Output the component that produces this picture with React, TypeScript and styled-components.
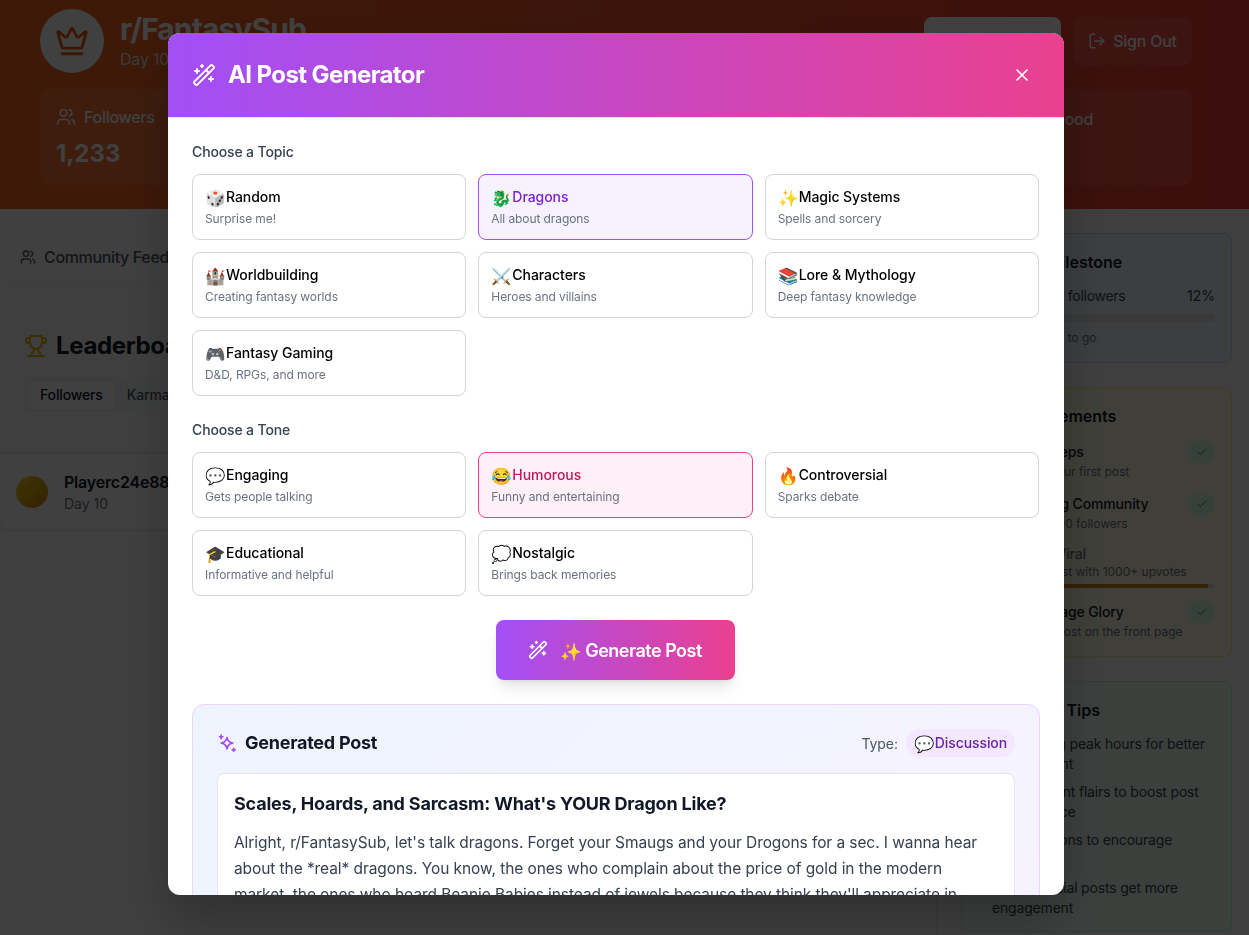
import React from "react";
import styled, { createGlobalStyle } from "styled-components";
import { Crown, Users, LogOut, Trophy, Check, WandSparkles, X, Target, Award, Lightbulb } from "lucide-react";

const Global = createGlobalStyle`
  * { box-sizing: border-box; }
  html, body { margin: 0; padding: 0; height: 100%; overflow: hidden; }
  body { font-family: Inter, "Liberation Sans", sans-serif; background: #f9fafb; color: #111827; }
`;

const Page = styled.div`
  width: 1249px;
  height: 935px;
  overflow: hidden;
  display: flex;
  flex-direction: column;
  background: #f9fafb;
`;

const Header = styled.header`
  height: 209px;
  flex: none;
  background: linear-gradient(90deg, #f4681f, #ec3c34);
  padding: 9px 57px 0 40px;
  color: #fff;
`;

const TopRow = styled.div`
  display: flex;
  align-items: flex-start;
  justify-content: space-between;
`;

const Brand = styled.div`
  display: flex;
  align-items: center;
  gap: 16px;
`;

const Avatar = styled.div`
  width: 64px;
  height: 64px;
  border-radius: 50%;
  background: #fff;
  display: flex;
  align-items: center;
  justify-content: center;
  color: #ea580c;
`;

const SubName = styled.h1`
  margin: 0;
  font-size: 30px;
  line-height: 36px;
  font-weight: 700;
  letter-spacing: -0.9px;
`;

const SubMeta = styled.div`
  font-size: 16px;
  line-height: 24px;
  color: #e5e7eb;
  letter-spacing: -0.2px;
`;

const HeaderActions = styled.div`
  display: flex;
  gap: 12px;
  margin-top: 8px;
`;

const WhiteButton = styled.div`
  width: 137px;
  height: 48px;
  border-radius: 8px;
  background: #fff;
`;

const SignOut = styled.div`
  width: 119px;
  height: 48px;
  border-radius: 8px;
  background: rgba(255, 255, 255, 0.1);
  display: flex;
  align-items: center;
  justify-content: center;
  gap: 7px;
  font-size: 16px;
  font-weight: 500;
  letter-spacing: -0.25px;
`;

const Stats = styled.div`
  display: flex;
  justify-content: space-between;
  margin-top: 16px;
`;

const StatCard = styled.div`
  width: 260px;
  height: 96px;
  border-radius: 8px;
  background: rgba(255, 255, 255, 0.1);
  padding: 16px;
`;

const StatLabel = styled.div`
  display: flex;
  align-items: center;
  gap: 8px;
  font-size: 16px;
  line-height: 24px;
  font-weight: 500;
  letter-spacing: -0.3px;
`;

const StatValue = styled.div`
  margin-top: 9px;
  font-size: 24px;
  line-height: 32px;
  font-weight: 700;
`;

const MoodLabel = styled(StatLabel)`
  justify-content: flex-end;
  margin-top: 2px;
  padding-right: 83px;
`;

const Body = styled.div`
  flex: 1;
  display: grid;
  grid-template-columns: 937px 312px;
  min-height: 0;
`;

const Main = styled.main`
  min-width: 0;
  border-right: 1px solid #e5e7eb;
`;

const Tabs = styled.nav`
  height: 71px;
  padding: 36px 20px 0;
  display: flex;
  align-items: flex-start;
  background: #fff;
  border-radius: 0 0 8px 8px;
  box-shadow: 0 1px 2px rgba(0, 0, 0, 0.05);
`;

const Tab = styled.div`
  display: flex;
  align-items: center;
  gap: 8px;
  font-size: 16px;
  line-height: 24px;
  font-weight: 500;
  color: #4b5563;
  letter-spacing: -0.35px;
`;

const Section = styled.section`
  padding: 50px 24px 0;
`;

const BoardTitle = styled.h2`
  margin: 0;
  display: flex;
  align-items: center;
  gap: 8px;
  font-size: 24px;
  line-height: 32px;
  font-weight: 700;
  letter-spacing: -0.35px;
  color: #111827;
`;

const Segment = styled.div`
  display: inline-flex;
  margin-top: 16px;
  padding: 3px 4px;
  border-radius: 8px;
  background: #f3f4f6;
`;

const SegmentItem = styled.div<{ $active?: boolean }>`
  padding: 4px 12px;
  border-radius: 6px;
  font-size: 14px;
  line-height: 20px;
  font-weight: 500;
  letter-spacing: -0.14px;
  color: ${(p) => (p.$active ? "#111827" : "#4b5563")};
  background: ${(p) => (p.$active ? "#fff" : "transparent")};
`;

const PlayerRow = styled.div`
  display: flex;
  align-items: center;
  gap: 16px;
  height: 76px;
  margin-top: 41px;
  padding: 0 16px;
  background: #fff;
  border-top: 1px solid #e5e7eb;
  border-radius: 0 0 8px 8px;
  box-shadow: 0 1px 3px rgba(0, 0, 0, 0.1);
`;

const PlayerDot = styled.div`
  width: 32px;
  height: 32px;
  border-radius: 50%;
  background: linear-gradient(135deg, #facc15, #ca8a04);
`;

const PlayerName = styled.div`
  font-size: 16px;
  line-height: 24px;
  font-weight: 600;
  letter-spacing: -0.2px;
  color: #111827;
`;

const PlayerMeta = styled.div`
  font-size: 14px;
  line-height: 20px;
  color: #6b7280;
`;

const Side = styled.aside`
  padding: 24px 17px 0 24px;
  display: flex;
  flex-direction: column;
  gap: 24px;
`;

const SideCard = styled.div<{ $bg: string; $line: string; $h: number }>`
  flex: none;
  height: ${(p) => p.$h}px;
  padding: 16px 16px 0;
  border-radius: 8px;
  background: ${(p) => p.$bg};
  border: 1px solid ${(p) => p.$line};
`;

const SideTitle = styled.h3<{ $gap?: number }>`
  margin: 0 0 ${(p) => p.$gap ?? 12}px;
  display: flex;
  align-items: center;
  gap: 8px;
  font-size: 16px;
  line-height: 24px;
  font-weight: 600;
  color: #111827;
`;

const MilestoneRow = styled.div`
  display: flex;
  justify-content: space-between;
  font-size: 14px;
  line-height: 20px;
  color: #374151;
`;

const MilestoneLabel = styled.span`
  letter-spacing: -0.28px;
`;

const Track = styled.div<{ $h?: number; $gap?: number }>`
  height: ${(p) => p.$h ?? 8}px;
  margin-top: ${(p) => p.$gap ?? 8}px;
  border-radius: 4px;
  background: #e5e7eb;
  overflow: hidden;
`;

const Fill = styled.div<{ $color: string }>`
  height: 100%;
  background: ${(p) => p.$color};
`;

const SmallNote = styled.div`
  margin-top: 8px;
  font-size: 12px;
  line-height: 16px;
  color: #6b7280;
`;

const Achievement = styled.div`
  display: flex;
  justify-content: space-between;
  align-items: flex-start;
  margin-bottom: 14px;
  padding-left: 36px;
`;

const AchText = styled.div`
  flex: 1;
  min-width: 0;
`;

const AchName = styled.div<{ $muted?: boolean }>`
  font-size: 14px;
  line-height: ${(p) => (p.$muted ? 16 : 20)}px;
  font-weight: 500;
  letter-spacing: -0.15px;
  color: ${(p) => (p.$muted ? "#6b7280" : "#111827")};
`;

const AchNote = styled.div`
  margin-top: 2px;
  font-size: 12px;
  line-height: 16px;
  color: #6b7280;
`;

const CheckBadge = styled.div`
  flex: none;
  width: 27px;
  height: 24px;
  margin-top: -2px;
  border-radius: 50%;
  background: #dcfce7;
  color: #16a34a;
  display: flex;
  align-items: center;
  justify-content: center;
`;

const TipList = styled.div`
  display: flex;
  flex-direction: column;
  gap: 8px;
  font-size: 14px;
  line-height: 20px;
  letter-spacing: -0.18px;
  color: #374151;
  padding-left: 14px;
`;

const Overlay = styled.div`
  position: fixed;
  inset: 0;
  padding: 0 17px 7px 0;
  background: rgba(0, 0, 0, 0.75);
  display: flex;
  align-items: center;
  justify-content: center;
`;

const Modal = styled.div`
  width: 896px;
  height: 862px;
  background: #fff;
  border-radius: 12px;
  overflow: hidden;
  box-shadow: 0 25px 50px rgba(0, 0, 0, 0.25);
`;

const ModalHeader = styled.div`
  height: 85px;
  padding: 0 32px 0 24px;
  display: flex;
  align-items: center;
  justify-content: space-between;
  background: linear-gradient(90deg, #a24ff6, #ea408f);
  border-bottom: 1px solid #e5e7eb;
  color: #fff;
`;

const ModalTitle = styled.h2`
  margin: 0;
  display: flex;
  align-items: center;
  gap: 12px;
  font-size: 24px;
  line-height: 32px;
  font-weight: 700;
  letter-spacing: -0.6px;
`;

const CloseButton = styled.button`
  padding: 0;
  border: 0;
  background: none;
  color: #fff;
  display: flex;
`;

const ModalBody = styled.div`
  padding: 24px;
`;

const GroupLabel = styled.div`
  font-size: 14px;
  line-height: 20px;
  font-weight: 500;
  letter-spacing: -0.14px;
  color: #374151;
  margin-bottom: 12px;
`;

const OptionGrid = styled.div`
  display: grid;
  grid-template-columns: repeat(3, 1fr);
  gap: 12px;
  width: 847px;
  margin-bottom: 24px;
`;

const Option = styled.div<{ $tone?: "purple" | "pink" }>`
  height: 66px;
  padding: 12px;
  border-radius: 8px;
  border: 1px solid
    ${(p) => (p.$tone === "purple" ? "#a24ff6" : p.$tone === "pink" ? "#ea408f" : "#d1d5db")};
  background: ${(p) => (p.$tone === "purple" ? "#f7f2ff" : p.$tone === "pink" ? "#fdf0f7" : "#fff")};
`;

const OptionName = styled.div<{ $tone?: "purple" | "pink" }>`
  font-size: 14px;
  line-height: 20px;
  font-weight: 500;
  letter-spacing: -0.05px;
  white-space: nowrap;
  color: ${(p) => (p.$tone === "purple" ? "#7e22ce" : p.$tone === "pink" ? "#be185d" : "#000")};
`;

const Emoji = styled.span<{ $size?: number; $width?: number; $gap?: number }>`
  display: inline-block;
  width: ${(p) => p.$width ?? 18}px;
  margin-right: ${(p) => p.$gap ?? 3}px;
  font-size: ${(p) => p.$size ?? 16.5}px;
  line-height: 1;
  letter-spacing: 0;
  vertical-align: -1.5px;
`;

const OptionNote = styled.div`
  margin-top: 4px;
  font-size: 12px;
  line-height: 16px;
  letter-spacing: -0.09px;
  color: #6b7280;
`;

const GenerateWrap = styled.div`
  display: flex;
  justify-content: center;
  width: 846px;
  margin-bottom: 24px;
`;

const GenerateButton = styled.button`
  width: 239px;
  height: 60px;
  border: 0;
  border-radius: 8px;
  display: flex;
  align-items: center;
  justify-content: center;
  gap: 12px;
  font-family: inherit;
  font-size: 18px;
  font-weight: 600;
  letter-spacing: -0.5px;
  color: #fff;
  background: linear-gradient(90deg, #a24ff6, #ea408f);
  box-shadow: 0 10px 15px -3px rgba(0, 0, 0, 0.1), 0 4px 6px -4px rgba(0, 0, 0, 0.1);
`;

const ResultPanel = styled.div`
  width: 848px;
  padding: 24px;
  border: 1px solid #e9d5ff;
  border-radius: 12px;
  background: linear-gradient(135deg, #eef4ff, #f7f3ff);
`;

const ResultHead = styled.div`
  display: flex;
  align-items: center;
  justify-content: space-between;
  height: 28px;
  margin-bottom: 16px;
`;

const ResultTitle = styled.h3`
  margin: 0;
  display: flex;
  align-items: center;
  gap: 8px;
  font-size: 18px;
  line-height: 28px;
  font-weight: 700;
  letter-spacing: -0.25px;
  color: #111827;
`;

const TypeLine = styled.div`
  display: flex;
  align-items: center;
  gap: 8px;
  font-size: 14px;
  letter-spacing: -0.1px;
  color: #4b5563;
`;

const TypePill = styled.span`
  padding: 4px 8px;
  border-radius: 999px;
  background: #f3e8ff;
  color: #6b21a8;
  font-size: 14px;
  line-height: 20px;
  font-weight: 500;
  white-space: nowrap;
`;

const PostCard = styled.div`
  padding: 16px;
  border: 1px solid #e5e7eb;
  border-radius: 8px;
  background: #fff;
`;

const PostTitle = styled.h4`
  margin: 0 0 12px;
  font-size: 18px;
  line-height: 28px;
  font-weight: 700;
  letter-spacing: -0.2px;
  color: #111827;
`;

const PostText = styled.p`
  margin: 0;
  font-size: 15.5px;
  line-height: 26px;
  letter-spacing: -0.08px;
  color: #374151;
`;

const SparkIcon = () => (
  <svg width="20" height="20" viewBox="0 0 24 24" fill="none" stroke="#a547f5" strokeWidth="2" strokeLinecap="round" strokeLinejoin="round" aria-hidden="true">
    <path d="M12 5.5c.7 3.9 2.6 5.8 7 6.5-4.4.7-6.3 2.6-7 7-.7-4.4-2.6-6.3-7-7 4.4-.7 6.3-2.6 7-6.5Z" />
    <path d="M5 2.5v4M3 4.5h4" />
    <path d="M20 18.5v3.5M18.2 20.2h3.6" />
  </svg>
);

type Opt = { icon: string; name: string; note: string; tone?: "purple" | "pink" };

const topics: Opt[] = [
  { icon: "🎲", name: "Random", note: "Surprise me!" },
  { icon: "🐉", name: "Dragons", note: "All about dragons", tone: "purple" },
  { icon: "✨", name: "Magic Systems", note: "Spells and sorcery" },
  { icon: "🏰", name: "Worldbuilding", note: "Creating fantasy worlds" },
  { icon: "⚔️", name: "Characters", note: "Heroes and villains" },
  { icon: "📚", name: "Lore & Mythology", note: "Deep fantasy knowledge" },
  { icon: "🎮", name: "Fantasy Gaming", note: "D&D, RPGs, and more" },
];

const tones: Opt[] = [
  { icon: "💬", name: "Engaging", note: "Gets people talking" },
  { icon: "😂", name: "Humorous", note: "Funny and entertaining", tone: "pink" },
  { icon: "🔥", name: "Controversial", note: "Sparks debate" },
  { icon: "🎓", name: "Educational", note: "Informative and helpful" },
  { icon: "💭", name: "Nostalgic", note: "Brings back memories" },
];

function OptionCards({ items }: { items: Opt[] }) {
  return (
    <OptionGrid>
      {items.map((o) => (
        <Option key={o.name} $tone={o.tone}>
          <OptionName $tone={o.tone}>
            <Emoji>{o.icon}</Emoji>
            {o.name}
          </OptionName>
          <OptionNote>{o.note}</OptionNote>
        </Option>
      ))}
    </OptionGrid>
  );
}

export default function App() {
  return (
    <>
      <Global />
      <Page>
        <Header>
          <TopRow>
            <Brand>
              <Avatar>
                <Crown size={34} />
              </Avatar>
              <div>
                <SubName>r/FantasySub</SubName>
                <SubMeta>Day 10</SubMeta>
              </div>
            </Brand>
            <HeaderActions>
              <WhiteButton />
              <SignOut>
                <LogOut size={18} />
                Sign Out
              </SignOut>
            </HeaderActions>
          </TopRow>
          <Stats>
            <StatCard>
              <StatLabel>
                <Users size={20} />
                Followers
              </StatLabel>
              <StatValue>1,233</StatValue>
            </StatCard>
            <StatCard>
              <MoodLabel>Mood</MoodLabel>
            </StatCard>
          </Stats>
        </Header>
        <Body>
          <Main>
            <Tabs>
              <Tab>
                <Users size={16} />
                Community Feed
              </Tab>
            </Tabs>
            <Section>
              <BoardTitle>
                <Trophy size={24} color="#eab308" />
                Leaderboard
              </BoardTitle>
              <Segment>
                <SegmentItem $active>Followers</SegmentItem>
                <SegmentItem>Karma</SegmentItem>
              </Segment>
            </Section>
            <PlayerRow>
              <PlayerDot />
              <div>
                <PlayerName>Playerc24e88</PlayerName>
                <PlayerMeta>Day 10</PlayerMeta>
              </div>
            </PlayerRow>
          </Main>
          <Side>
            <SideCard $bg="#eff6ff" $line="#bfdbfe" $h={130}>
              <SideTitle>
                <Target size={20} />
                Next Milestone
              </SideTitle>
              <MilestoneRow>
                <MilestoneLabel>Reach 10,000 followers</MilestoneLabel>
                <span>12%</span>
              </MilestoneRow>
              <Track>
                <Fill $color="#3b82f6" style={{ width: "12%" }} />
              </Track>
              <SmallNote>8,767 followers to go</SmallNote>
            </SideCard>
            <SideCard $bg="#fefce8" $line="#fef08a" $h={270}>
              <SideTitle $gap={14}>
                <Award size={20} />
                Achievements
              </SideTitle>
              <Achievement>
                <AchText>
                  <AchName>First Steps</AchName>
                  <AchNote>Share your first post</AchNote>
                </AchText>
                <CheckBadge>
                  <Check size={12} />
                </CheckBadge>
              </Achievement>
              <Achievement>
                <AchText>
                  <AchName>Growing Community</AchName>
                  <AchNote>Reach 100 followers</AchNote>
                </AchText>
                <CheckBadge>
                  <Check size={12} />
                </CheckBadge>
              </Achievement>
              <Achievement>
                <AchText>
                  <AchName $muted>Going Viral</AchName>
                  <AchNote>Get a post with 1000+ upvotes</AchNote>
                  <Track $h={4} $gap={4}>
                    <Fill $color="#ca8a04" style={{ width: "96.5%" }} />
                  </Track>
                </AchText>
              </Achievement>
              <Achievement>
                <AchText>
                  <AchName>Front Page Glory</AchName>
                  <AchNote>Have a post on the front page</AchNote>
                </AchText>
                <CheckBadge>
                  <Check size={12} />
                </CheckBadge>
              </Achievement>
            </SideCard>
            <SideCard $bg="#f0fdf4" $line="#bbf7d0" $h={251}>
              <SideTitle>
                <Lightbulb size={20} />
                Growth Tips
              </SideTitle>
              <TipList>
                <div>Post during peak hours for better engagement</div>
                <div>Use different flairs to boost post performance</div>
                <div>Ask questions to encourage comments</div>
                <div>Controversial posts get more engagement</div>
              </TipList>
            </SideCard>
          </Side>
        </Body>
      </Page>
      <Overlay>
        <Modal>
          <ModalHeader>
            <ModalTitle>
              <WandSparkles size={24} />
              AI Post Generator
            </ModalTitle>
            <CloseButton aria-label="Close">
              <X size={20} />
            </CloseButton>
          </ModalHeader>
          <ModalBody>
            <GroupLabel>Choose a Topic</GroupLabel>
            <OptionCards items={topics} />
            <GroupLabel>Choose a Tone</GroupLabel>
            <OptionCards items={tones} />
            <GenerateWrap>
              <GenerateButton>
                <WandSparkles size={20} />
                <span>
                  <Emoji $size={17.5} $width={20} $gap={5}>✨</Emoji>
                  Generate Post
                </span>
              </GenerateButton>
            </GenerateWrap>
            <ResultPanel>
              <ResultHead>
                <ResultTitle>
                  <SparkIcon />
                  Generated Post
                </ResultTitle>
                <TypeLine>
                  Type:
                  <TypePill>
                    <Emoji>💬</Emoji>
                    Discussion
                  </TypePill>
                </TypeLine>
              </ResultHead>
              <PostCard>
                <PostTitle>Scales, Hoards, and Sarcasm: What's YOUR Dragon Like?</PostTitle>
                <PostText>
                  Alright, r/FantasySub, let's talk dragons. Forget your Smaugs and your Drogons for a sec. I wanna hear
                  about the *real* dragons. You know, the ones who complain about the price of gold in the modern market,
                  the ones who hoard Beanie Babies instead of jewels because they think they'll appreciate in value (they
                  won't). Tell us about yours.
                </PostText>
              </PostCard>
            </ResultPanel>
          </ModalBody>
        </Modal>
      </Overlay>
    </>
  );
}
